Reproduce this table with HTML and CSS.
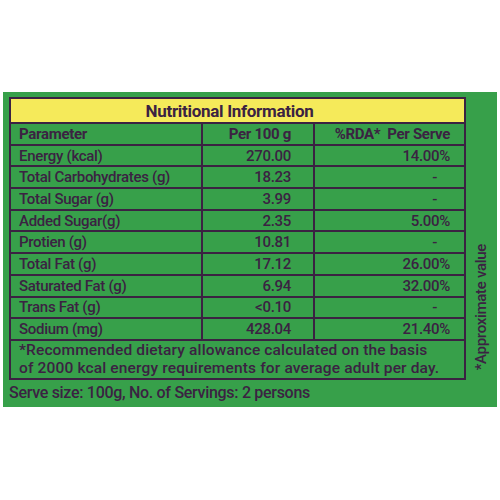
FILE: index.html
```html
<!DOCTYPE html>
<html lang="en">
<head>
    <meta charset="UTF-8">
    <title>Nutritional Information</title>
    <link rel="stylesheet" href="styles.css">
</head>
<body>
    <div class="panel">
        <div class="main">
            <table class="facts">
                <colgroup>
                    <col class="col-param">
                    <col class="col-num">
                    <col class="col-rda">
                </colgroup>
                <tr class="title-row">
                    <th colspan="3">Nutritional Information</th>
                </tr>
                <tr class="head-row">
                    <td>Parameter</td>
                    <td class="num">Per 100 g</td>
                    <td class="rda">%RDA*&nbsp; Per Serve</td>
                </tr>
                <tr><td>Energy (kcal)</td><td class="num">270.00</td><td class="rda">14.00%</td></tr>
                <tr><td>Total Carbohydrates (g)</td><td class="num">18.23</td><td class="rda dash">-</td></tr>
                <tr><td>Total Sugar (g)</td><td class="num">3.99</td><td class="rda dash">-</td></tr>
                <tr><td>Added Sugar(g)</td><td class="num">2.35</td><td class="rda">5.00%</td></tr>
                <tr><td>Protien (g)</td><td class="num">10.81</td><td class="rda dash">-</td></tr>
                <tr><td>Total Fat (g)</td><td class="num">17.12</td><td class="rda">26.00%</td></tr>
                <tr><td>Saturated Fat (g)</td><td class="num">6.94</td><td class="rda">32.00%</td></tr>
                <tr><td>Trans Fat (g)</td><td class="num">&lt;0.10</td><td class="rda dash">-</td></tr>
                <tr><td>Sodium (mg)</td><td class="num">428.04</td><td class="rda">21.40%</td></tr>
                <tr class="note-row">
                    <td colspan="3">*Recommended dietary allowance calculated on the basis<br>of 2000 kcal energy requirements for average adult per day.</td>
                </tr>
            </table>
            <p class="serve">Serve size: 100g, No. of Servings: 2 persons</p>
        </div>
        <div class="side">
            <span class="approx">*Approximate value</span>
        </div>
    </div>
</body>
</html>
```

FILE: styles.css
```css
body {
    margin: 0;
    background-color: #ffffff;
    font-family: 'Roboto', 'Liberation Sans', sans-serif;
    color: #3b2242;
}

.panel {
    display: flex;
    width: 494px;
    height: 315px;
    margin: 92px 0 0 3px;
    background-color: #37a04a;
    box-sizing: border-box;
    padding: 5px 0 0 6px;
}

.main {
    width: 455px;
}

/* Table */
.facts {
    width: 455px;
    border-collapse: collapse;
    table-layout: fixed;
    border: 2px solid #3b2242;
}

.col-param { width: 192px; }
.col-num { width: 112px; }
.col-rda { width: 151px; }

.facts td,
.facts th {
    border: 2px solid #3b2242;
    height: 19.7px;
    padding: 0 0 0 8px;
    font-size: 15px;
    font-weight: 500;
    letter-spacing: -0.3px;
    line-height: 18px;
    white-space: nowrap;
}

.title-row th {
    background-color: #f5ea5a;
    height: 23px;
    font-size: 17px;
    font-weight: bold;
    text-align: center;
    padding: 0 16px 0 0;
}

.head-row td {
    font-weight: bold;
}

.facts .num {
    text-align: right;
    padding-right: 22px;
}

.facts .rda {
    text-align: right;
    padding-right: 14px;
}

.facts .dash {
    padding-right: 27px;
}

.note-row td {
    height: 37px;
    font-size: 15.5px;
    line-height: 18.5px;
    white-space: nowrap;
    letter-spacing: 0.15px;
}

.serve {
    margin: 3px 0 0 0;
    font-size: 16px;
    font-weight: 500;
    letter-spacing: -0.3px;
}

/* Vertical side note */
.side {
    flex: 1;
    display: flex;
    justify-content: center;
    align-items: flex-end;
    padding-bottom: 37px;
}

.approx {
    writing-mode: vertical-rl;
    transform: rotate(180deg);
    font-size: 15px;
    font-weight: 500;
    letter-spacing: -0.3px;
}
```
